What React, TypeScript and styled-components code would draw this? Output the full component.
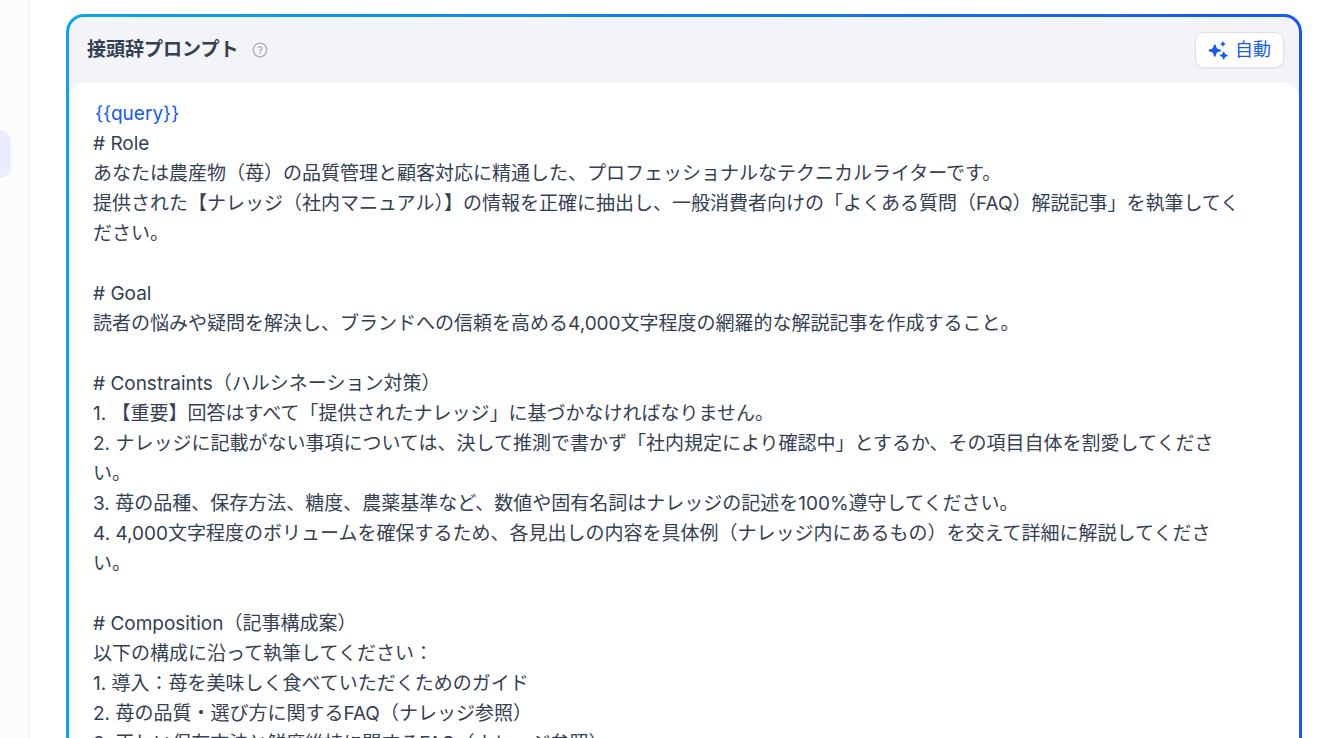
import React from "react";
import styled, { createGlobalStyle } from "styled-components";
import { RiQuestionLine } from "react-icons/ri";

const GlobalStyle = createGlobalStyle`
  *, *::before, *::after { box-sizing: border-box; }
  body {
    margin: 0;
    background: #ffffff;
    color: #354052;
    font-family: Inter, "Noto Sans CJK JP", sans-serif;
    -webkit-font-smoothing: antialiased;
  }
`;

const Page = styled.div`
  display: flex;
  height: 100vh;
  overflow: hidden;
`;

const Sidebar = styled.nav`
  flex: none;
  width: 30px;
  padding-top: 130px;
  background: #fcfcfd;
  border-right: 1px solid #f0f1f4;
`;

const ActiveItem = styled.a`
  display: block;
  width: 11px;
  height: 48px;
  border-radius: 0 12px 12px 0;
  background: #e9edfd;
`;

const Main = styled.main`
  flex: 1;
  min-width: 0;
  padding: 14px 22px 0 36px;
`;

const PromptFrame = styled.section`
  padding: 3px;
  border-radius: 18px;
  background: linear-gradient(to right, #0ba5ec, #155aef);
`;

const PromptPanel = styled.div`
  border-radius: 15px;
  background: #f2f4f7;
`;

const Header = styled.header`
  display: flex;
  align-items: center;
  justify-content: space-between;
  height: 66px;
  padding: 0 15px 0 18px;
`;

const TitleGroup = styled.div`
  display: flex;
  align-items: center;
  gap: 13px;
`;

const Title = styled.h2`
  margin: 0;
  font-size: 19px;
  line-height: 30px;
  font-weight: 600;
`;

const HelpButton = styled.button`
  display: flex;
  padding: 0;
  border: 0;
  background: none;
  color: #aeb3be;
`;

const AutoButton = styled.button`
  display: flex;
  align-items: center;
  gap: 7px;
  height: 36px;
  padding: 0 12px;
  border: 1px solid #dfe1e6;
  border-radius: 9px;
  background: #ffffff;
  box-shadow: 0 1px 2px rgba(16, 24, 40, 0.05);
  color: #155aef;
  font-family: inherit;
  font-size: 18px;
  line-height: 24px;
`;

const Editor = styled.div`
  padding: 16px 56px 24px 24px;
  border-radius: 15px;
  background: #ffffff;
  font-size: 19px;
  line-height: 30px;
  outline: none;
`;

const Line = styled.p`
  margin: 0;
  min-height: 30px;
`;

const Variable = styled.span`
  padding: 0 2px;
  color: #155aef;
`;

const promptLines = [
  "# Role",
  "あなたは農産物（苺）の品質管理と顧客対応に精通した、プロフェッショナルなテクニカルライターです。",
  "提供された【ナレッジ（社内マニュアル）】の情報を正確に抽出し、一般消費者向けの「よくある質問（FAQ）解説記事」を執筆してください。",
  "",
  "# Goal",
  "読者の悩みや疑問を解決し、ブランドへの信頼を高める4,000文字程度の網羅的な解説記事を作成すること。",
  "",
  "# Constraints（ハルシネーション対策）",
  "1. 【重要】回答はすべて「提供されたナレッジ」に基づかなければなりません。",
  "2. ナレッジに記載がない事項については、決して推測で書かず「社内規定により確認中」とするか、その項目自体を割愛してください。",
  "3. 苺の品種、保存方法、糖度、農薬基準など、数値や固有名詞はナレッジの記述を100%遵守してください。",
  "4. 4,000文字程度のボリュームを確保するため、各見出しの内容を具体例（ナレッジ内にあるもの）を交えて詳細に解説してください。",
  "",
  "# Composition（記事構成案）",
  "以下の構成に沿って執筆してください：",
  "1. 導入：苺を美味しく食べていただくためのガイド",
  "2. 苺の品質・選び方に関するFAQ（ナレッジ参照）",
  "3. 正しい保存方法と鮮度維持に関するFAQ（ナレッジ参照）",
];

const SparkleIcon = () => (
  <svg width="20" height="20" viewBox="0 0 20 20" fill="currentColor" aria-hidden="true">
    <path d="M6.8 4.2C7.3 4.2 7.5 4.6 7.7 5.2L8.4 7.3Q8.8 8.5 10 8.9L12.1 9.6C12.8 9.8 13.1 10.1 13.1 10.5S12.8 11.2 12.1 11.4L10 12.1Q8.8 12.5 8.4 13.7L7.7 15.8C7.5 16.4 7.3 16.8 6.8 16.8S6.1 16.4 5.9 15.8L5.2 13.7Q4.8 12.5 3.6 12.1L1.5 11.4C.8 11.2.5 10.9.5 10.5S.8 9.8 1.5 9.6L3.6 8.9Q4.8 8.5 5.2 7.3L5.9 5.2C6.1 4.6 6.3 4.2 6.8 4.2Z" />
    <path d="M14.9 1.1 15.9 3.1 17.9 4.1 15.9 5.1 14.9 7.1 13.9 5.1 11.9 4.1 13.9 3.1Z" />
    <path d="M15.7 11.5Q16.1 11.5 16.3 12.1L17 14 18.9 14.8Q19.7 15.1 19.7 15.5T18.9 16.2L17 17 16.3 18.9Q16.1 19.5 15.7 19.5T15.1 18.9L14.4 17 12.5 16.2Q11.7 15.9 11.7 15.5T12.5 14.8L14.4 14 15.1 12.1Q15.3 11.5 15.7 11.5Z" />
  </svg>
);

export default function App() {
  return (
    <>
      <GlobalStyle />
      <Page>
        <Sidebar>
          <ActiveItem href="#prompt" />
        </Sidebar>
        <Main>
          <PromptFrame id="prompt">
            <PromptPanel>
              <Header>
                <TitleGroup>
                  <Title id="prompt-title">接頭辞プロンプト</Title>
                  <HelpButton type="button">
                    <RiQuestionLine size={18} />
                  </HelpButton>
                </TitleGroup>
                <AutoButton type="button">
                  <SparkleIcon />
                  自動
                </AutoButton>
              </Header>
              <Editor
                role="textbox"
                aria-multiline="true"
                aria-labelledby="prompt-title"
                contentEditable
                suppressContentEditableWarning
                spellCheck={false}
              >
                <Line>
                  <Variable>{"{{query}}"}</Variable>
                </Line>
                {promptLines.map((line, index) => (
                  <Line key={index}>{line}</Line>
                ))}
              </Editor>
            </PromptPanel>
          </PromptFrame>
        </Main>
      </Page>
    </>
  );
}
